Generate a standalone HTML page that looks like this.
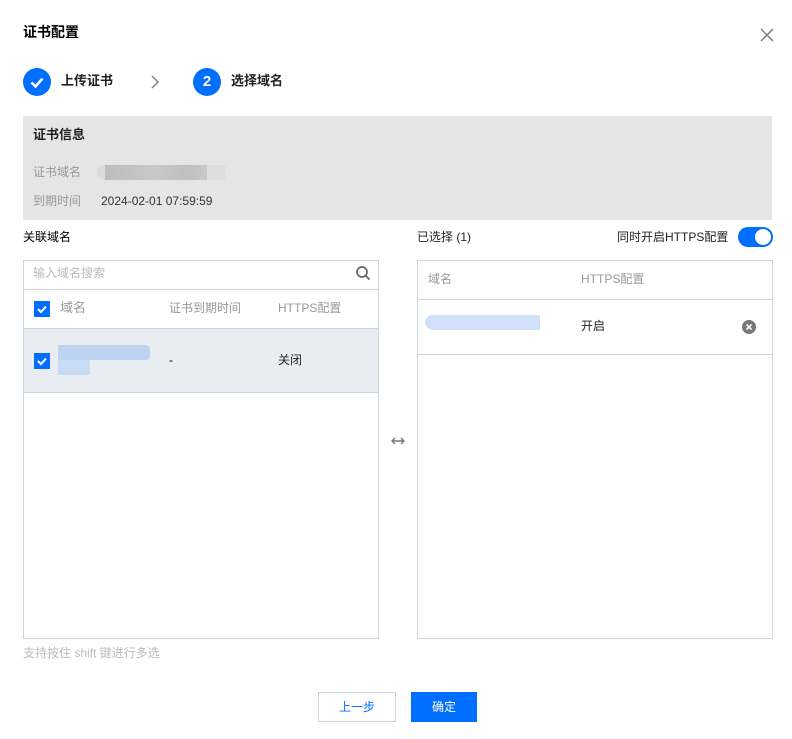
<!DOCTYPE html><html><head><meta charset="utf-8"><style>
*{margin:0;padding:0;box-sizing:border-box}
body{width:792px;height:739px;background:#fff;position:relative;font-family:"Liberation Sans","Noto Sans CJK SC",sans-serif;font-size:12px;color:#000;overflow:hidden}
.a{position:absolute;white-space:nowrap;line-height:16px}
.g{color:#999}
.cb{position:absolute;width:16px;height:16px;background:#006eff}
.cb svg{position:absolute;left:0;top:0}
</style></head><body>
<div class="a" style="left:23px;top:24px;font-size:14px;font-weight:bold;color:#000">证书配置</div>
<svg class="a" style="left:760px;top:28px" width="14" height="14"><path d="M1 1L13 13M13 1L1 13" stroke="#888" stroke-width="1.6"/></svg>
<div class="a" style="left:23px;top:68px;width:28px;height:28px;border-radius:50%;background:#006eff"></div>
<svg class="a" style="left:23px;top:68px" width="28" height="28"><path d="M8.5 14.5l4 4 7-8" stroke="#fff" stroke-width="2.6" fill="none"/></svg>
<div class="a" style="left:61px;top:73px;font-size:13px;font-weight:bold;color:#222">上传证书</div>
<svg class="a" style="left:150px;top:75px" width="10" height="14"><path d="M2 1l6 6-6 6" stroke="#888" stroke-width="1.5" fill="none"/></svg>
<div class="a" style="left:193px;top:68px;width:28px;height:28px;border-radius:50%;background:#006eff;color:#fff;font-weight:bold;font-size:15px;text-align:center;line-height:28px">2</div>
<div class="a" style="left:231px;top:73px;font-size:13px;font-weight:bold;color:#222">选择域名</div>
<div class="a" style="left:23px;top:116px;width:749px;height:104px;background:#e5e5e5"></div>
<div class="a" style="left:33px;top:127px;font-size:13px;font-weight:bold;color:#222">证书信息</div>
<div class="a g" style="left:33px;top:164px">证书域名</div>
<div class="a" style="left:97px;top:165px;width:128px;height:15px;background:linear-gradient(90deg,#dcdcdc 0,#dcdcdc 8px,#bdbdbd 8px,#c8c8c8 60px,#bfbfbf 90px,#c8c8c8 110px,#ddd 110px);border-radius:7px 0 0 7px"></div>
<div class="a g" style="left:33px;top:193px">到期时间</div>
<div class="a" style="left:101px;top:193px;color:#333">2024-02-01 07:59:59</div>
<div class="a" style="left:23px;top:229px;color:#000">关联域名</div>
<div class="a" style="left:23px;top:260px;width:356px;height:379px;border:1px solid #cfd5de"></div>
<div class="a" style="left:24px;top:289px;width:354px;height:1px;background:#cfd5de"></div>
<div class="a" style="left:24px;top:328px;width:354px;height:65px;background:#e9ecf1;border-top:1px solid #cfd5de;border-bottom:1px solid #cfd5de"></div>
<div class="a" style="left:33px;top:265px;color:#bbb">输入域名搜索</div>
<svg class="a" style="left:355px;top:265px" width="16" height="16"><circle cx="7" cy="7" r="5" stroke="#666" stroke-width="1.7" fill="none"/><path d="M10.5 10.5l4 4" stroke="#666" stroke-width="1.8"/></svg>
<div class="cb" style="left:34px;top:301px"><svg width="16" height="16"><path d="M4 8l3 3 5-5.5" stroke="#fff" stroke-width="2" fill="none"/></svg></div>
<div class="a g" style="left:60px;top:300px;font-size:13px">域名</div>
<div class="a g" style="left:169px;top:300px;font-size:12px">证书到期时间</div>
<div class="a g" style="left:278px;top:300px;font-size:12px">HTTPS配置</div>
<div class="cb" style="left:34px;top:353px"><svg width="16" height="16"><path d="M4 8l3 3 5-5.5" stroke="#fff" stroke-width="2" fill="none"/></svg></div>
<div class="a" style="left:58px;top:345px;width:92px;height:15px;background:#bcd3f2;border-radius:0 4px 4px 0"></div>
<div class="a" style="left:58px;top:360px;width:32px;height:15px;background:#c8dbf5"></div>
<div class="a" style="left:169px;top:352px">-</div>
<div class="a" style="left:278px;top:352px;color:#222">关闭</div>
<svg class="a" style="left:390px;top:436px" width="16" height="10"><path d="M2 5h12M5 2L2 5l3 3M11 2l3 3-3 3" stroke="#777" stroke-width="1.4" fill="none"/></svg>
<div class="a" style="left:417px;top:229px;color:#222">已选择 (1)</div>
<div class="a" style="left:617px;top:229px;color:#222">同时开启HTTPS配置</div>
<div class="a" style="left:738px;top:227px;width:35px;height:20px;border-radius:10px;background:#006eff"></div>
<div class="a" style="left:755px;top:229px;width:16px;height:16px;border-radius:50%;background:#fff"></div>
<div class="a" style="left:417px;top:260px;width:356px;height:379px;border:1px solid #cfd5de"></div>
<div class="a" style="left:418px;top:299px;width:354px;height:1px;background:#cfd5de"></div>
<div class="a" style="left:418px;top:354px;width:354px;height:1px;background:#cfd5de"></div>
<div class="a g" style="left:428px;top:271px">域名</div>
<div class="a g" style="left:581px;top:271px">HTTPS配置</div>
<div class="a" style="left:425px;top:315px;width:115px;height:15px;background:#cfe0f8;border-radius:8px 0 0 8px"></div>
<div class="a" style="left:581px;top:318px;color:#222">开启</div>
<svg class="a" style="left:742px;top:320px" width="14" height="14"><circle cx="7" cy="7" r="7" fill="#777"/><path d="M4.5 4.5l5 5M9.5 4.5l-5 5" stroke="#fff" stroke-width="1.6"/></svg>
<div class="a" style="left:23px;top:645px;color:#bbb">支持按住 shift 键进行多选</div>
<div class="a" style="left:318px;top:692px;width:78px;height:30px;border:1px solid #cfd5de;color:#006eff;text-align:center;line-height:28px">上一步</div>
<div class="a" style="left:411px;top:692px;width:66px;height:30px;background:#006eff;color:#fff;text-align:center;line-height:30px">确定</div>
</body></html>
